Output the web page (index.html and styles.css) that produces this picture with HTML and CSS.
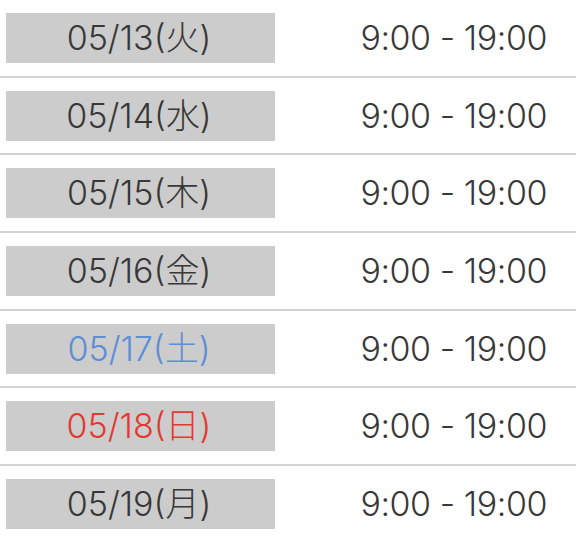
FILE: index.html
```html
<!DOCTYPE html>
<html lang="ja">
<head>
<meta charset="utf-8">
<link rel="stylesheet" href="styles.css">
</head>
<body>
<div class="list">
  <div class="row"><div class="date">05/13(火)</div><div class="time">9:00 - 19:00</div></div>
  <div class="row"><div class="date">05/14(水)</div><div class="time">9:00 - 19:00</div></div>
  <div class="row"><div class="date">05/15(木)</div><div class="time">9:00 - 19:00</div></div>
  <div class="row"><div class="date">05/16(金)</div><div class="time">9:00 - 19:00</div></div>
  <div class="row"><div class="date sat">05/17(土)</div><div class="time">9:00 - 19:00</div></div>
  <div class="row"><div class="date sun">05/18(日)</div><div class="time">9:00 - 19:00</div></div>
  <div class="row"><div class="date">05/19(月)</div><div class="time">9:00 - 19:00</div></div>
</div>
</body>
</html>
```
FILE: styles.css
```css
html, body {
  margin: 0;
  padding: 0;
  background: #ffffff;
}
.list {
  font-family: Inter, "Noto Sans CJK JP", sans-serif;
  font-weight: 300;
  color: #383838;
}
.row {
  display: flex;
  align-items: center;
  padding: 12.85px 0 12.85px 6px;
  border-bottom: 2px solid #d3d3d3;
}
.date {
  width: 269px;
  height: 50px;
  background: #cccccc;
  display: flex;
  align-items: center;
  justify-content: center;
  font-size: 34px;
  line-height: 1;
  padding-right: 3px;
  box-sizing: border-box;
}
.date.sat { color: #5b8ed6; }
.date.sun { color: #e23a30; }
.time {
  flex: 1;
  text-align: right;
  padding-right: 29px;
  font-size: 34px;
  line-height: 1;
  letter-spacing: -0.45px;
}
```
